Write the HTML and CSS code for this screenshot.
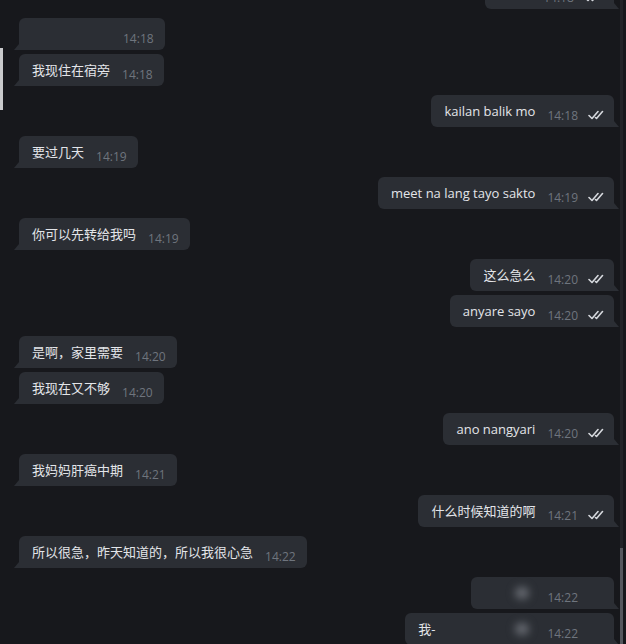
FILE: index.html
```html
<!DOCTYPE html>
<html lang="zh">
<head>
    <meta charset="UTF-8">
    <meta name="viewport" content="width=device-width, initial-scale=1.0">
    <title>Chat</title>
    <link rel="stylesheet" href="styles.css">
</head>
<body>
    <div class="edge-strip"></div>
    <div class="chat">
        <div class="msg out first">
            <span class="text">ok na</span>
            <span class="time">14:18</span>
            <svg class="check" viewBox="0 0 18 10"><path d="M1 5.5l3 3 6-7M7.5 7.5l1 1 6-7"/></svg>
        </div>

        <div class="msg in">
            <span class="text empty"></span>
            <span class="time">14:18</span>
        </div>
        <div class="msg in same">
            <span class="text">我现住在宿旁</span>
            <span class="time">14:18</span>
        </div>

        <div class="msg out">
            <span class="text">kailan balik mo</span>
            <span class="time">14:18</span>
            <svg class="check" viewBox="0 0 18 10"><path d="M1 5.5l3 3 6-7M7.5 7.5l1 1 6-7"/></svg>
        </div>

        <div class="msg in">
            <span class="text">要过几天</span>
            <span class="time">14:19</span>
        </div>

        <div class="msg out">
            <span class="text">meet na lang tayo sakto</span>
            <span class="time">14:19</span>
            <svg class="check" viewBox="0 0 18 10"><path d="M1 5.5l3 3 6-7M7.5 7.5l1 1 6-7"/></svg>
        </div>

        <div class="msg in">
            <span class="text">你可以先转给我吗</span>
            <span class="time">14:19</span>
        </div>

        <div class="msg out">
            <span class="text">这么急么</span>
            <span class="time">14:20</span>
            <svg class="check" viewBox="0 0 18 10"><path d="M1 5.5l3 3 6-7M7.5 7.5l1 1 6-7"/></svg>
        </div>
        <div class="msg out same">
            <span class="text">anyare sayo</span>
            <span class="time">14:20</span>
            <svg class="check" viewBox="0 0 18 10"><path d="M1 5.5l3 3 6-7M7.5 7.5l1 1 6-7"/></svg>
        </div>

        <div class="msg in">
            <span class="text">是啊，家里需要</span>
            <span class="time">14:20</span>
        </div>
        <div class="msg in same">
            <span class="text">我现在又不够</span>
            <span class="time">14:20</span>
        </div>

        <div class="msg out">
            <span class="text">ano nangyari</span>
            <span class="time">14:20</span>
            <svg class="check" viewBox="0 0 18 10"><path d="M1 5.5l3 3 6-7M7.5 7.5l1 1 6-7"/></svg>
        </div>

        <div class="msg in">
            <span class="text">我妈妈肝癌中期</span>
            <span class="time">14:21</span>
        </div>

        <div class="msg out">
            <span class="text">什么时候知道的啊</span>
            <span class="time">14:21</span>
            <svg class="check" viewBox="0 0 18 10"><path d="M1 5.5l3 3 6-7M7.5 7.5l1 1 6-7"/></svg>
        </div>

        <div class="msg in">
            <span class="text">所以很急，昨天知道的，所以我很心急</span>
            <span class="time">14:22</span>
        </div>

        <!-- last two are blurred in the source -->
        <div class="msg out plain">
            <span class="text blurred"><i class="smudge"></i></span>
            <span class="time">14:22</span>
        </div>
        <div class="msg out plain same">
            <span class="text">我-<span class="blurred wide"><i class="smudge"></i></span></span>
            <span class="time">14:22</span>
        </div>
    </div>
    <div class="scrollbar">
        <div class="thumb"></div>
    </div>
</body>
</html>
```

FILE: styles.css
```css
html, body {
    margin: 0;
    padding: 0;
}
body {
    position: relative;
    display: flex;
    height: 644px;
    overflow: hidden;
    background: #17181c;
    font-family: "Open Sans", "Noto Sans CJK SC", sans-serif;
    color: #e3e5e9;
}
.edge-strip {
    position: absolute;
    left: 0;
    top: 48px;
    width: 3px;
    height: 62px;
    background: #c9cacc;
}
.chat {
    flex: 1;
    display: flex;
    flex-direction: column;
    padding: 0 6px 0 19px;
}
.msg {
    position: relative;
    display: flex;
    align-items: flex-end;
    height: 32px;
    box-sizing: border-box;
    padding: 6px 11px 4px 13px;
    margin-top: 9px;
    background: #2b2e34;
    border-radius: 6px;
    flex-shrink: 0;
}
.msg.same {
    margin-top: 4px;
}
.msg.first {
    margin-top: -23px;
    width: 129px;
}
.msg.in {
    align-self: flex-start;
    border-bottom-left-radius: 0;
}
.msg.out {
    align-self: flex-end;
    padding-right: 8px;
    border-bottom-right-radius: 0;
}
.msg.out.plain {
    padding-right: 36px;
}
/* bubble tails */
.msg.in::before {
    content: "";
    position: absolute;
    left: -5px;
    bottom: 0;
    border-bottom: 6px solid #2b2e34;
    border-left: 5px solid transparent;
}
.msg.out::after {
    content: "";
    position: absolute;
    right: -5px;
    bottom: 0;
    border-bottom: 6px solid #2b2e34;
    border-right: 5px solid transparent;
}
.text {
    font-size: 13px;
    line-height: 20px;
    margin-bottom: 2px;
    white-space: nowrap;
}
.text.empty {
    width: 79px;
}
.time {
    margin-left: 12px;
    font-size: 12px;
    line-height: 14px;
    color: #6f757e;
}
.check {
    width: 18px;
    height: 10px;
    margin: 0 0 3px 10px;
    fill: none;
    stroke: #d6d9de;
    stroke-width: 1.6;
    stroke-linecap: round;
    stroke-linejoin: round;
}
.msg.first .text {
    visibility: hidden;
}
.blurred {
    position: relative;
    display: inline-block;
    width: 51px;
    height: 20px;
    vertical-align: top;
}
.blurred.wide {
    width: 100px;
}
.smudge {
    position: absolute;
    right: 6px;
    top: 4px;
    width: 14px;
    height: 12px;
    border-radius: 50%;
    background: #6a6e75;
    filter: blur(4px);
}
.scrollbar {
    position: relative;
    width: 3px;
    margin-right: 3px;
    background: #222428;
}
.thumb {
    position: absolute;
    left: 0;
    right: 0;
    top: 548px;
    bottom: 0;
    background: #55585e;
}
```
